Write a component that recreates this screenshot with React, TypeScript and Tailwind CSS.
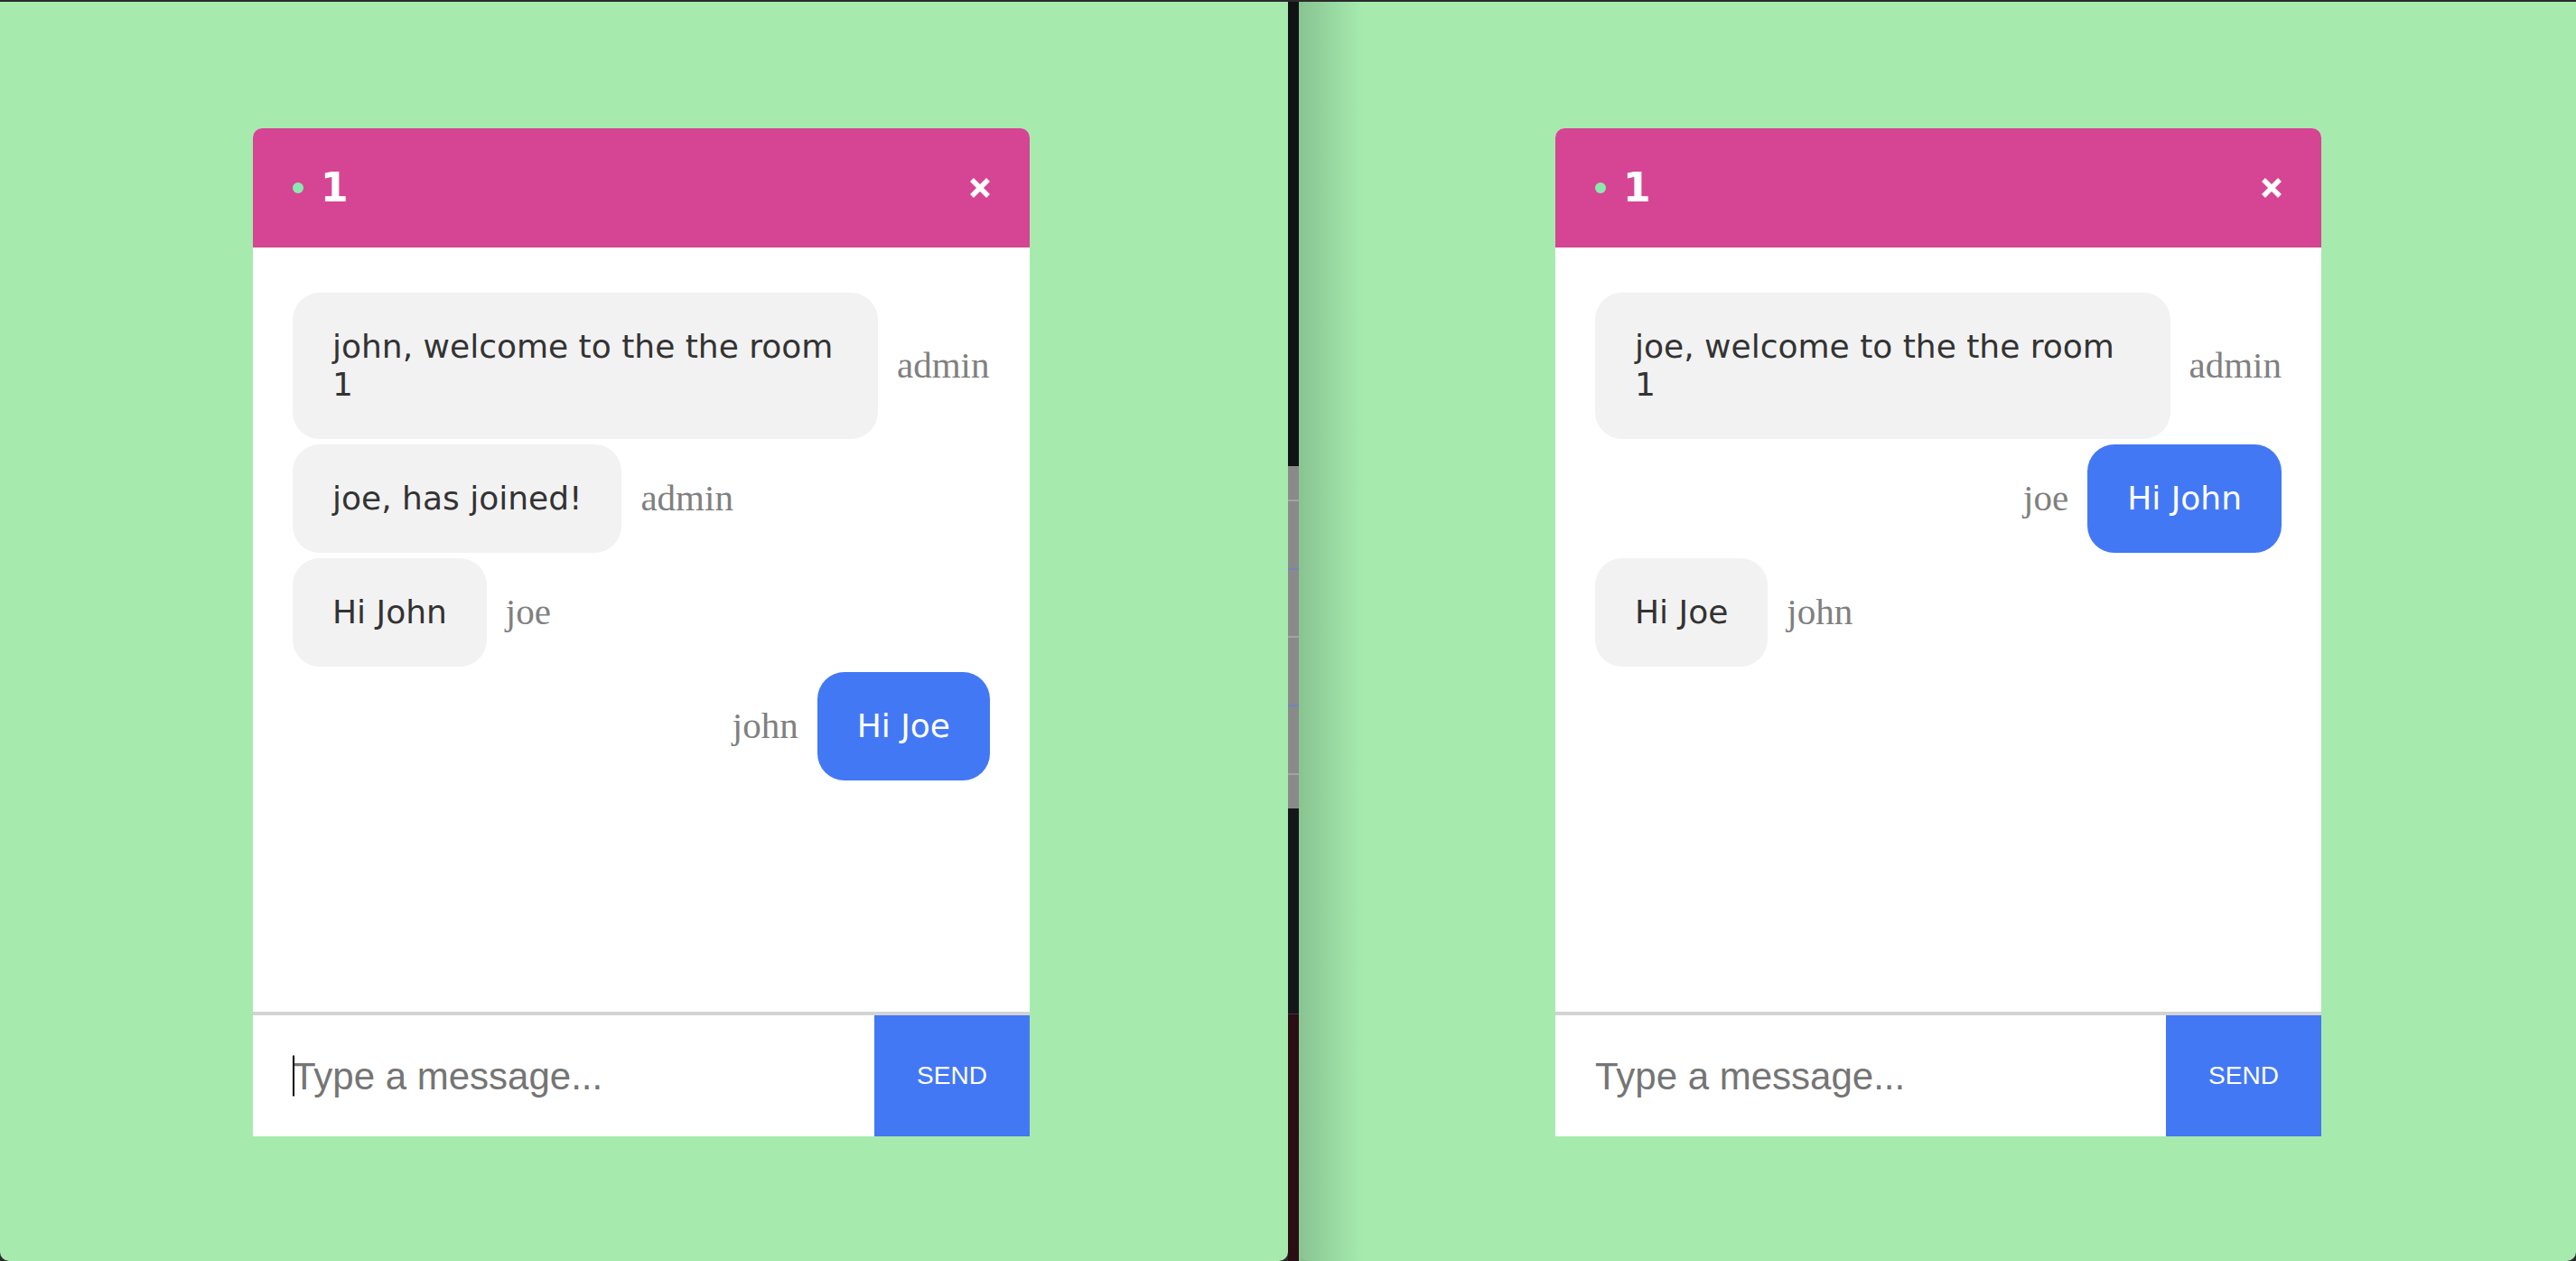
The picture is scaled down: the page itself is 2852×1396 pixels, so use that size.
import { Fragment } from 'react'

type Msg = {
  text: string
  user: string
  own?: boolean
}

type Room = {
  name: string
  messages: Msg[]
  cardClass: string
  bubbleMax: string
  focused?: boolean
}

const rooms: Room[] = [
  {
    name: '1',
    cardClass: 'w-[860px]',
    bubbleMax: 'max-w-[648px]',
    focused: true,
    messages: [
      { text: 'john, welcome to the the room 1', user: 'admin' },
      { text: 'joe, has joined!', user: 'admin' },
      { text: 'Hi John', user: 'joe' },
      { text: 'Hi Joe', user: 'john', own: true },
    ],
  },
  {
    name: '1',
    cardClass: 'w-[848px]',
    bubbleMax: 'max-w-[638px]',
    messages: [
      { text: 'joe, welcome to the the room 1', user: 'admin' },
      { text: 'Hi John', user: 'joe', own: true },
      { text: 'Hi Joe', user: 'john' },
    ],
  },
]

const CloseIcon = () => (
  <svg width="22" height="22" viewBox="0 0 22 22" fill="none">
    <path d="M2 2L20 20M20 2L2 20" stroke="white" strokeWidth="5.5" />
  </svg>
)

const Message = ({ msg, bubbleMax }: { msg: Msg; bubbleMax: string }) => {
  const bubble = (
    <div
      className={`${bubbleMax} rounded-[30px] px-[44px] py-[39px] font-['DejaVu_Sans',sans-serif] text-[36px] leading-[42px] ${
        msg.own ? 'bg-[#4378f5] text-white' : 'bg-[#f2f2f2] text-[#333333]'
      }`}
    >
      {msg.text}
    </div>
  )
  const label = (
    <span className="shrink-0 font-['Liberation_Serif',serif] text-[41px] text-[#808080]">{msg.user}</span>
  )

  return (
    <div className={`flex items-center gap-[21px] ${msg.own ? 'justify-end' : 'justify-start'}`}>
      {msg.own ? (
        <Fragment>
          {label}
          {bubble}
        </Fragment>
      ) : (
        <Fragment>
          {bubble}
          {label}
        </Fragment>
      )}
    </div>
  )
}

const ChatCard = ({ room }: { room: Room }) => (
  <div className={`${room.cardClass} h-[1116px] flex flex-col bg-white rounded-t-[10px] overflow-hidden`}>
    <div className="h-[132px] shrink-0 bg-[#d64593] px-[44px] flex items-center justify-between">
      <div className="flex items-center">
        <span className="w-[12px] h-[12px] rounded-full bg-[#8de8b0]" />
        <span className="ml-[19px] font-['DejaVu_Sans',sans-serif] font-bold text-[44px] text-white">{room.name}</span>
      </div>
      <button className="flex items-center">
        <CloseIcon />
      </button>
    </div>

    <div className="flex-1 flex flex-col gap-[6px] pt-[50px] px-[44px]">
      {room.messages.map((m, i) => (
        <Message key={i} msg={m} bubbleMax={room.bubbleMax} />
      ))}
    </div>

    <div className="h-[138px] shrink-0 flex border-t-4 border-[#d3d3d3]">
      <div className="relative flex-1 flex">
        <input
          className="flex-1 pl-[44px] outline-none bg-white font-['Liberation_Sans',Arial,sans-serif] text-[42px] text-[#222] placeholder:text-[#757575]"
          placeholder="Type a message..."
        />
        {room.focused ? (
          <span className="absolute left-[44px] top-1/2 -translate-y-1/2 w-[2px] h-[45px] bg-black" />
        ) : null}
      </div>
      <button className="w-[172px] bg-[#4378f5] text-white font-['Liberation_Sans',Arial,sans-serif] text-[28px] uppercase">
        Send
      </button>
    </div>
  </div>
)

export default function App() {
  return (
    <div className="w-[2852px] h-[1396px] overflow-hidden flex pt-[2px] bg-[#2a2a2c]">
      {/* left window */}
      <div className="w-[1426px] h-full bg-[#a6eaae] rounded-b-[10px] pl-[280px] pt-[140px]">
        <ChatCard room={rooms[0]} />
      </div>

      {/* desktop peeking between the windows */}
      <div className="w-[12px] h-full flex flex-col bg-[#111216]">
        <div className="h-[514px] bg-[#111216]" />
        <div className="h-[379px] bg-[#8a8a8a] flex flex-col justify-around">
          <div className="h-[2px] bg-[#a4a4a4]" />
          <div className="h-[2px] bg-[#6f86b8]" />
          <div className="h-[2px] bg-[#a4a4a4]" />
          <div className="h-[2px] bg-[#6f86b8]" />
          <div className="h-[2px] bg-[#a4a4a4]" />
        </div>
        <div className="h-[228px] bg-[#15161a] border-b border-[#3a3a3c]" />
        <div className="flex-1 bg-[#2a0e13]" />
      </div>

      {/* right window */}
      <div className="relative flex-1 h-full bg-[#a6eaae] rounded-b-[10px] pl-[284px] pt-[140px]">
        <div className="absolute left-0 top-0 bottom-0 w-[70px] bg-linear-to-r from-[#88c491] to-transparent" />
        <ChatCard room={rooms[1]} />
      </div>
    </div>
  )
}
